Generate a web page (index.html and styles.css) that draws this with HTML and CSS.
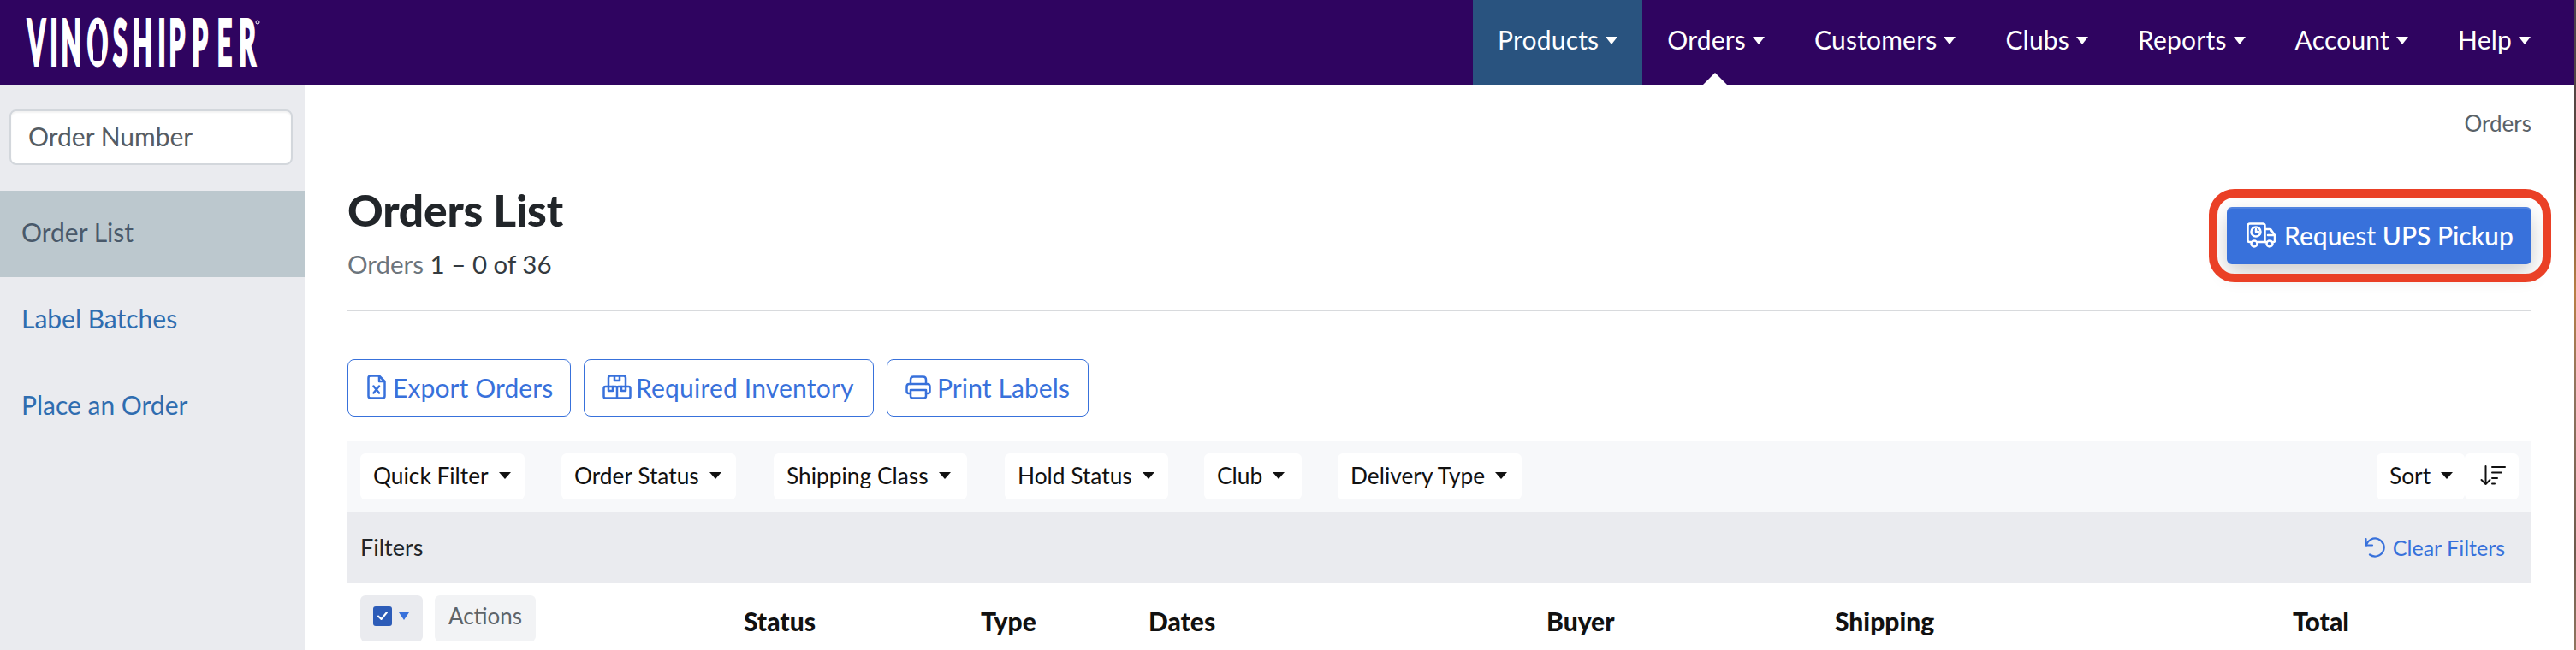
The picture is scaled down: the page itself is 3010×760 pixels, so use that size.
FILE: index.html
```html
<!DOCTYPE html>
<html lang="en">
<head>
<meta charset="utf-8">
<title>Orders List</title>
<link rel="stylesheet" href="styles.css">
</head>
<body>
<div class="shell">
  <div class="app">
    <header class="topbar">
      <a class="logo" href="#" aria-label="Vinoshipper">
        <svg class="logo-svg" width="272" height="56" viewBox="0 0 272 56">
          <text class="logo-text" transform="scale(.42 1)" x="0 63 94 166 238 292 363 394 458 528 589" y="53">VINOSHIPPER</text>
          <path class="logo-bottle" d="M80 5h4v11l3 6v24q0 2-2 2h-6q-2 0-2-2V22l3-6z"/>
          <circle class="logo-reg" cx="269" cy="3" r="2"/>
        </svg>
      </a>
      <nav class="nav">
        <a class="nav-item is-hover" href="#">Products<i class="nav-caret"></i></a>
        <a class="nav-item is-current" href="#">Orders<i class="nav-caret"></i></a>
        <a class="nav-item" href="#">Customers<i class="nav-caret"></i></a>
        <a class="nav-item" href="#">Clubs<i class="nav-caret"></i></a>
        <a class="nav-item" href="#">Reports<i class="nav-caret"></i></a>
        <a class="nav-item" href="#">Account<i class="nav-caret"></i></a>
        <a class="nav-item" href="#">Help<i class="nav-caret"></i></a>
      </nav>
    </header>
    <div class="body">
      <aside class="sidebar">
        <div class="search-wrap"><input class="search" type="text" placeholder="Order Number"></div>
        <a class="side-link is-active" href="#">Order List</a>
        <a class="side-link" href="#">Label Batches</a>
        <a class="side-link" href="#">Place an Order</a>
      </aside>
      <main class="main">
        <div class="crumb">Orders</div>
        <div class="title-row">
          <div>
            <h1 class="title">Orders List</h1>
            <p class="subtitle">Orders <span class="subtitle-num">1 – 0 of 36</span></p>
          </div>
          <a class="btn-primary" href="#">
            <svg class="truck-icon" width="36" height="30" viewBox="0 0 36 30" fill="none" stroke="#fff" stroke-width="2.500" stroke-linecap="round" stroke-linejoin="round">
              <path d="M5 23H3.500Q1.500 23 1.500 21V4Q1.500 1.500 4 1.500H19Q21.500 1.500 21.500 4V23H13"/>
              <path d="M21.500 8H28L33 15V21.500Q33 23 31.500 23H31M23 23H21.500M25 15H33"/>
              <circle cx="9" cy="25" r="3.500"/><circle cx="27" cy="25" r="3.500"/>
              <circle cx="11" cy="11" r="5.500"/><path d="M11 8V11H14"/>
            </svg>
            Request UPS Pickup
          </a>
        </div>
        <div class="rule"></div>
        <div class="actions">
          <a class="btn-outline btn-export" href="#">
            <svg width="22" height="29" viewBox="0 0 22 29" fill="none" stroke="currentColor" stroke-width="2.500" stroke-linecap="round" stroke-linejoin="round">
              <path d="M14 1.500H4Q1.500 1.500 1.500 4V25Q1.500 27.500 4 27.500H18Q20.500 27.500 20.500 25V8ZM14 1.500V8H20.500"/>
              <path d="M7.500 13.500L14 21.500M14 13.500L7.500 21.500"/>
            </svg>
            Export Orders
          </a>
          <a class="btn-outline btn-inventory" href="#">
            <svg width="34" height="29" viewBox="0 0 34 29" fill="none" stroke="currentColor" stroke-width="2.500" stroke-linecap="round" stroke-linejoin="round">
              <path d="M7 14V4Q7 1.500 9.500 1.500H24.500Q27 1.500 27 4V14"/>
              <path d="M14 1.500V7H20V1.500"/>
              <path d="M3.500 14H15.500Q17 14 17 15.500V27.500H3.500Q1.500 27.500 1.500 25.500V16Q1.500 14 3.500 14ZM17 15.500Q17 14 18.500 14H30.500Q32.500 14 32.500 16V25.500Q32.500 27.500 30.500 27.500H17"/>
              <path d="M7 14V19H12V14M22 14V19H27V14"/>
            </svg>
            Required Inventory
          </a>
          <a class="btn-outline btn-print" href="#">
            <svg width="30" height="28" viewBox="0 0 30 28" fill="none" stroke="currentColor" stroke-width="2.500" stroke-linecap="round" stroke-linejoin="round">
              <path d="M6 10V5Q6 1.500 9.500 1.500H20.500Q24 1.500 24 5V10"/>
              <path d="M6 21H4Q1.500 21 1.500 18.500V13Q1.500 10 4.500 10H25.500Q28.500 10 28.500 13V18.500Q28.500 21 26 21H24"/>
              <path d="M6 17H24V24Q24 26.500 21.500 26.500H8.500Q6 26.500 6 24Z"/>
            </svg>
            Print Labels
          </a>
        </div>
        <div class="filter-bar">
          <div class="chip chip-quick">Quick Filter<i class="caret"></i></div>
          <div class="chip chip-status">Order Status<i class="caret"></i></div>
          <div class="chip chip-class">Shipping Class<i class="caret"></i></div>
          <div class="chip chip-hold">Hold Status<i class="caret"></i></div>
          <div class="chip chip-club">Club<i class="caret"></i></div>
          <div class="chip chip-delivery">Delivery Type<i class="caret"></i></div>
          <div class="sort">
            <div class="chip chip-sort">Sort<i class="caret"></i></div>
            <div class="chip chip-dir">
              <svg width="30" height="24" viewBox="0 0 30 24" fill="none" stroke="#111" stroke-width="2" stroke-linecap="round" stroke-linejoin="round">
                <path d="M6.500 1V22M1.500 17L6.500 22L11.500 17"/>
                <path d="M14 2H29M14 8.500H25M14 15H20M14 21.500H17"/>
              </svg>
            </div>
          </div>
        </div>
        <div class="filters-row">
          <span class="filters-label">Filters</span>
          <a class="clear" href="#">
            <svg width="24" height="24" viewBox="0 0 24 24" fill="none" stroke="currentColor" stroke-width="2.200" stroke-linecap="round" stroke-linejoin="round">
              <path d="M1.500 2V9.500H9"/><path d="M2 9.500A10.500 10.500 0 1 1 6 20.500"/>
            </svg>
            Clear Filters
          </a>
        </div>
        <div class="table-head">
          <div class="select-cell">
            <div class="check-chip"><span class="checkbox"><svg width="14" height="12" viewBox="0 0 14 12" fill="none" stroke="#fff" stroke-width="2" stroke-linecap="round" stroke-linejoin="round"><path d="M2 6.500L5.500 10L12 2"/></svg></span><i class="check-caret"></i></div>
            <div class="actions-chip">Actions</div>
          </div>
          <div class="th">Status</div>
          <div class="th">Type</div>
          <div class="th">Dates</div>
          <div class="th">Buyer</div>
          <div class="th">Shipping</div>
          <div class="th">Total</div>
        </div>
      </main>
    </div>
  </div>
  <div class="edge"></div>
</div>
</body>
</html>
```
FILE: styles.css
```css
* { box-sizing: border-box; }
html, body { margin: 0; height: 760px; overflow: hidden; }
body { font-family: Lato, "Open Sans", sans-serif; background: #fff; color: #212529; }
a { text-decoration: none; }
i { display: block; }
h1, p { margin: 0; }

.shell { display: flex; height: 760px; }
.app { flex: 1; min-width: 0; display: flex; flex-direction: column; }
.edge { width: 2px; background: linear-gradient(#4a3f4c 0, #5b4a3e 25%, #b87f45 45%, #8f7460 60%, #6d5a4d 85%, #8f7560 100%); }

.topbar { height: 99px; flex: none; background: #2f0460; display: flex; justify-content: space-between; padding: 0 22px 0 32px; }
.logo { display: block; padding-top: 23px; }
.logo-svg { display: block; overflow: visible; }
.logo-text { font-family: Lato, sans-serif; font-weight: 700; font-size: 72px; fill: #fff; stroke: #fff; stroke-width: 3px; vector-effect: non-scaling-stroke; }
.logo-bottle { fill: #2f0460; }
.logo-reg { fill: none; stroke: #fff; stroke-width: 1; }

.nav { display: flex; }
.nav-item { position: relative; display: flex; align-items: flex-start; padding: 29px 29px 0; color: #fff; font-size: 30px; line-height: 34px; letter-spacing: .2px; }
.nav-caret { margin: 14px 0 0 8px; border-style: solid; border-width: 9px 7.500px 0; border-color: #fff transparent transparent; }
.nav-item.is-hover { background: #29537f; }
.nav-item.is-current::after { content: ""; position: absolute; left: 71px; bottom: 0; border-style: solid; border-width: 0 14.500px 14px; border-color: transparent transparent #fff; }

.body { flex: 1; min-height: 0; display: flex; }
.sidebar { width: 356px; flex: none; background: #eaebef; }
.search-wrap { padding: 29px 14px 30px 11px; }
.search { display: block; width: 100%; height: 65px; border: 2px solid #d3d7dc; border-radius: 8px; background: #fff; padding: 0 20px 3px; font: 30px Lato, sans-serif; color: #555c63; box-shadow: inset 0 2px 2px rgba(0,0,0,.05); outline: 0; }
.search::placeholder { color: #555c63; opacity: 1; }
.side-link { display: flex; align-items: center; height: 101px; padding: 0 0 5px 25px; font-size: 30px; color: #2f6db0; }
.side-link.is-active { background: #bcc8ce; color: #49596a; }

.main { flex: 1; min-width: 0; padding: 0 50px; }
.crumb { padding-top: 29px; text-align: right; font-size: 26px; line-height: 32px; color: #5a6268; }
.title-row { display: flex; justify-content: space-between; align-items: flex-start; margin-top: 53px; }
.title { font-size: 51.500px; font-weight: 900; line-height: 64px; color: #212529; letter-spacing: -.2px; }
.subtitle { margin-top: 15px; font-size: 29.500px; line-height: 34px; color: #6c757d; }
.subtitle-num { color: #343a40; }
.btn-primary { position: relative; display: flex; align-items: center; gap: 8px; width: 356px; height: 67px; margin-top: 29px; padding: 0 0 2px 23px; border-radius: 6px; background: #3871db; color: #fff; font-size: 30px; font-weight: 500; box-shadow: 0 10px 24px rgba(0,0,0,.2), inset 0 2px 0 rgba(255,255,255,.12); }
.btn-primary::after { content: ""; position: absolute; left: -21px; right: -23px; top: -21px; bottom: -21px; border: 10px solid #ea4026; border-radius: 30px; }
.rule { height: 2px; margin-top: 36px; background: #d8dadd; }

.actions { display: flex; gap: 15px; margin-top: 56px; }
.btn-outline { display: flex; align-items: center; height: 67px; padding-bottom: 2px; border: 1.500px solid #3871db; border-radius: 8px; background: #fff; color: #3871db; font-size: 30px; letter-spacing: .1px; white-space: nowrap; }
.btn-export { width: 261px; padding-left: 22px; gap: 8px; }
.btn-inventory { width: 339px; padding-left: 21px; gap: 5px; letter-spacing: .2px; }
.btn-print { width: 236px; padding-left: 21px; gap: 7px; }

.filter-bar { display: flex; height: 83px; margin-top: 29px; padding: 14px 15px 0; background: #f7f8fa; }
.chip { display: flex; align-items: center; height: 54px; padding: 0 0 3px 15px; border-radius: 6px; background: #fff; font-size: 26.300px; color: #111; white-space: nowrap; }
.caret { margin-left: 12px; border-style: solid; border-width: 8px 7px 0; border-color: #111 transparent transparent; }
.chip-quick { width: 192px; margin-right: 43px; }
.chip-status { width: 204px; margin-right: 44px; }
.chip-class { width: 226px; margin-right: 44px; }
.chip-hold { width: 191px; margin-right: 42px; }
.chip-club { width: 114px; margin-right: 42px; }
.chip-delivery { width: 215px; }
.sort { display: flex; margin-left: auto; }
.chip-sort { width: 103px; }
.chip-dir { width: 63px; padding-left: 18px; }

.filters-row { display: flex; justify-content: space-between; align-items: center; height: 83px; padding: 0 31px 2px 15px; background: #eaebef; }
.filters-label { font-size: 27px; color: #212529; }
.clear { display: flex; align-items: center; gap: 9px; color: #3871db; font-size: 25px; }

.table-head { display: grid; grid-template-columns: 448px 277px 196px 465px 337px 535px 1fr; padding: 14px 0 0 15px; }
.select-cell { display: flex; gap: 14px; }
.check-chip { display: flex; align-items: center; width: 73px; height: 54px; padding: 0 0 6px 15px; border-radius: 6px; background: #eaebef; }
.checkbox { display: flex; align-items: center; justify-content: center; width: 22px; height: 23px; border-radius: 3px; background: #2d5cb8; }
.check-caret { margin-left: 8px; border-style: solid; border-width: 9px 6.500px 0; border-color: #3871db transparent transparent; }
.actions-chip { display: flex; align-items: center; justify-content: center; width: 118px; height: 54px; padding-bottom: 6px; border-radius: 6px; background: #f2f3f5; color: #5f6468; font-size: 26px; }
.th { padding-top: 13px; font-size: 30px; line-height: 34px; font-weight: 900; color: #111; }
```
